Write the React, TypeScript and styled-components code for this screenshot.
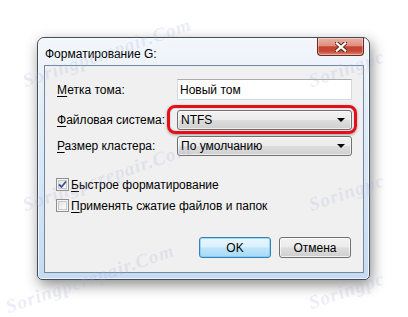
import React from "react";
import styled, { createGlobalStyle } from "styled-components";

const GlobalStyle = createGlobalStyle`
  html, body {
    margin: 0;
    padding: 0;
    background: #ffffff;
  }
  body {
    font-family: "Liberation Sans", Arial, sans-serif;
    font-size: 12px;
    color: #000;
  }
`;

const Page = styled.div`
  position: relative;
  width: 408px;
  height: 317px;
  overflow: hidden;
  padding: 37px 0 0 37px;
  box-sizing: border-box;
`;

const Window = styled.div`
  width: 333px;
  height: 243px;
  box-sizing: border-box;
  border: 1px solid #3f4e60;
  border-radius: 7px 7px 5px 5px;
  background: linear-gradient(to bottom, #f3f7fb 0%, #e3edf8 30%, #c6dbf1 100%);
  box-shadow: 2px 5px 14px rgba(0, 0, 0, 0.45), inset 0 0 0 1px rgba(255, 255, 255, 0.7);
  display: flex;
  flex-direction: column;
  padding: 0 5px 6px 6px;
`;

const TitleBar = styled.div`
  height: 27px;
  display: flex;
  justify-content: space-between;
  align-items: flex-start;
`;

const Title = styled.span`
  margin-top: 8px;
  padding-left: 1px;
  line-height: 16px;
  color: #000;
`;

const CloseButton = styled.div`
  width: 47px;
  height: 18px;
  box-sizing: border-box;
  border: 1px solid #6b2a22;
  border-top: none;
  border-radius: 0 0 4px 4px;
  background: linear-gradient(
    to bottom,
    #eab0a3 0%,
    #df8f80 45%,
    #c5442f 52%,
    #c54a36 78%,
    #dc8b7c 100%
  );
  box-shadow: inset 0 0 0 1px rgba(255, 255, 255, 0.35);
  display: flex;
  align-items: center;
  justify-content: center;
`;

const Client = styled.div`
  flex: 1;
  border: 1px solid #7289a3;
  background: #f0f0f0;
  display: flex;
  flex-direction: column;
  padding: 13px 11px 14px 12px;
`;

const FieldRow = styled.div<{ $top: number }>`
  display: flex;
  align-items: center;
  margin-top: ${(p) => p.$top}px;
`;

const Label = styled.span`
  width: 120px;
  flex-shrink: 0;
  line-height: 16px;
`;

const Mnemonic = styled.u`
  text-decoration: underline;
  text-underline-offset: 2px;
`;

const ControlSlot = styled.div`
  position: relative;
  width: 175px;
`;

const TextBox = styled.div`
  height: 21px;
  box-sizing: border-box;
  border: 1px solid #d5dae2;
  border-top-color: #abadb3;
  background: #ffffff;
  padding-left: 2px;
  display: flex;
  align-items: center;
`;

const Combo = styled.div`
  height: 20px;
  box-sizing: border-box;
  border: 1px solid #707070;
  border-radius: 3px;
  background: linear-gradient(to bottom, #f2f2f2 0%, #ebebeb 48%, #dddddd 52%, #cfcfcf 100%);
  box-shadow: inset 0 0 0 1px rgba(255, 255, 255, 0.6);
  display: flex;
  align-items: center;
  justify-content: space-between;
  padding: 0 6px 0 3px;
`;

const Arrow = styled.span`
  width: 0;
  height: 0;
  border-left: 4px solid transparent;
  border-right: 4px solid transparent;
  border-top: 4px solid #000;
`;

const Highlight = styled.div`
  position: absolute;
  left: -10px;
  right: -5px;
  top: -5px;
  bottom: -4px;
  border: 3px solid #e3101c;
  border-radius: 8px;
  box-shadow: 0 1px 3px rgba(0, 0, 0, 0.35), inset 0 0 2px rgba(0, 0, 0, 0.25);
  pointer-events: none;
`;

const CheckRow = styled.label<{ $top: number }>`
  display: flex;
  align-items: center;
  height: 15px;
  margin-top: ${(p) => p.$top}px;
  margin-left: -1px;
  gap: 2px;
`;

const Box = styled.span`
  width: 13px;
  height: 13px;
  box-sizing: border-box;
  border: 1px solid #8e8f8f;
  background: linear-gradient(135deg, #dcdcdc 0%, #f4f4f4 60%, #ffffff 100%);
  box-shadow: inset 0 0 0 1px #f4f4f4, inset 0 0 0 2px #c9c9c9;
  display: flex;
  align-items: center;
  justify-content: center;
`;

const ButtonRow = styled.div`
  margin-top: auto;
  display: flex;
  justify-content: flex-end;
  gap: 8px;
  padding-right: 1px;
`;

const Button = styled.div<{ $default?: boolean }>`
  width: 72px;
  height: 21px;
  box-sizing: border-box;
  border: 1px solid ${(p) => (p.$default ? "#3c7fb1" : "#707070")};
  border-radius: 3px;
  background: ${(p) =>
    p.$default
      ? "linear-gradient(to bottom, #eaf6fd 0%, #d9f0fc 48%, #bee6fd 52%, #a7d9f5 100%)"
      : "linear-gradient(to bottom, #f2f2f2 0%, #ebebeb 48%, #dddddd 52%, #cfcfcf 100%)"};
  box-shadow: inset 0 0 0 1px ${(p) => (p.$default ? "rgba(100,200,250,0.6)" : "rgba(255,255,255,0.7)")};
  display: flex;
  align-items: center;
  justify-content: center;
`;

const Watermark = styled.span<{ $x: number; $y: number }>`
  position: absolute;
  left: ${(p) => p.$x}px;
  top: ${(p) => p.$y}px;
  transform: rotate(-19deg);
  transform-origin: left bottom;
  font-family: "Liberation Serif", serif;
  font-style: italic;
  font-weight: bold;
  font-size: 19px;
  letter-spacing: 1px;
  white-space: nowrap;
  color: rgba(165, 175, 215, 0.22);
  pointer-events: none;
`;

const marks = [
  { x: 27, y: 70, t: "Soringpcrepair.Com" },
  { x: 313, y: 70, t: "Soringpc" },
  { x: 27, y: 194, t: "Soringpcrepair.Com" },
  { x: 313, y: 194, t: "Soringpc" },
  { x: 10, y: 296, t: "Soringpcrepair.Com" },
  { x: 313, y: 292, t: "Soringpc" },
];

const App: React.FC = () => {
  return (
    <>
      <GlobalStyle />
      <Page>
        <Window>
          <TitleBar>
            <Title>Форматирование G:</Title>
            <CloseButton>
              <svg width="12" height="10" viewBox="0 0 12 10">
                <path
                  d="M1.5 1 L10.5 9 M10.5 1 L1.5 9"
                  stroke="#4a1b14"
                  strokeWidth="4"
                  strokeLinecap="square"
                />
                <path
                  d="M1.8 1.3 L10.2 8.7 M10.2 1.3 L1.8 8.7"
                  stroke="#ffffff"
                  strokeWidth="2.2"
                  strokeLinecap="square"
                />
              </svg>
            </CloseButton>
          </TitleBar>
          <Client>
            <FieldRow $top={0}>
              <Label>
                <Mnemonic>М</Mnemonic>етка тома:
              </Label>
              <ControlSlot>
                <TextBox>Новый том</TextBox>
              </ControlSlot>
            </FieldRow>
            <FieldRow $top={10}>
              <Label>
                <Mnemonic>Ф</Mnemonic>айловая система:
              </Label>
              <ControlSlot>
                <Combo>
                  <span>NTFS</span>
                  <Arrow />
                </Combo>
                <Highlight />
              </ControlSlot>
            </FieldRow>
            <FieldRow $top={6}>
              <Label>
                <Mnemonic>Р</Mnemonic>азмер кластера:
              </Label>
              <ControlSlot>
                <Combo>
                  <span>По умолчанию</span>
                  <Arrow />
                </Combo>
              </ControlSlot>
            </FieldRow>
            <CheckRow $top={21}>
              <Box>
                <svg width="9" height="9" viewBox="0 0 9 9">
                  <path d="M1 4.5 L3.5 7 L8 1.5" fill="none" stroke="#3c5294" strokeWidth="1.8" />
                </svg>
              </Box>
              <span>
                <Mnemonic>Б</Mnemonic>ыстрое форматирование
              </span>
            </CheckRow>
            <CheckRow $top={6}>
              <Box />
              <span>
                <Mnemonic>П</Mnemonic>рименять сжатие файлов и папок
              </span>
            </CheckRow>
            <ButtonRow>
              <Button $default>OK</Button>
              <Button>Отмена</Button>
            </ButtonRow>
          </Client>
        </Window>
        {marks.map((m, i) => (
          <Watermark key={i} $x={m.x} $y={m.y}>
            {m.t}
          </Watermark>
        ))}
      </Page>
    </>
  );
};

export default App;
